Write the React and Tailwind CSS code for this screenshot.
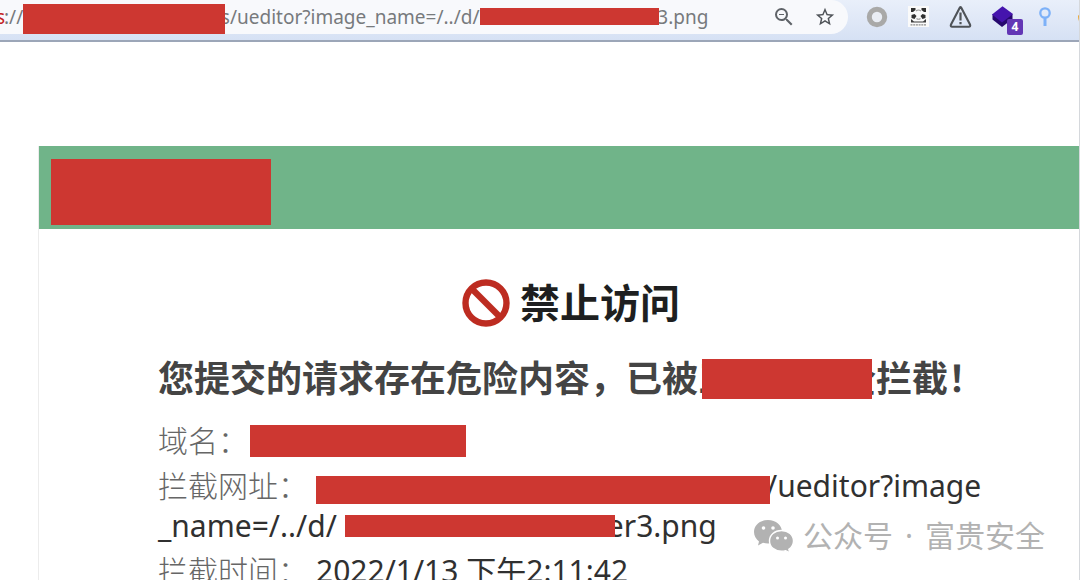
import { MdOutlineZoomOut, MdStarBorder } from "react-icons/md"
import clsx from "clsx"

const gap = (n) => "\u00a0".repeat(n)

const url = `://${gap(40)}s/ueditor?image_name=/../d/${gap(36)}3.png`

function Redacted({ className }) {
  return <span className={clsx("z-10 block shrink-0 bg-[#cd3731]", className)} />
}

function RingIcon() {
  return (
    <svg viewBox="0 0 24 24" className="h-6 w-6">
      <circle cx="12" cy="12" r="7.7" fill="#e9edf4" stroke="#a9a9a8" strokeWidth="5" />
    </svg>
  )
}

function PandaIcon() {
  return (
    <svg viewBox="0 0 24 24" className="h-6 w-6">
      <rect x="1" y="1" width="21" height="21" fill="#fafafa" />
      <path d="M4 7V3h4.500v2L6 7zM19 7V3h-4.500v2L17 7z" fill="#303030" />
      <path d="M4.500 10l3-1 2 2-2 3-3-1zM18.500 10l-3-1-2 2 2 3 3-1z" fill="#303030" />
      <path d="M4 14l3 2.500h9l3-2.500v3.500H4z" fill="#3c3c3c" />
      <path d="M9 6q2.500-2 5 0M9.500 13.500q2 1.500 4 0" fill="none" stroke="#9c9c9c" strokeWidth="1.200" />
      <path d="M3.500 19.800h16" stroke="#8c8c8c" strokeWidth="1.300" strokeDasharray="2 .7" />
    </svg>
  )
}

function WarningIcon() {
  return (
    <svg viewBox="0 0 24 24" className="h-6 w-6" fill="none" stroke="#4f5358" strokeWidth="2.100" strokeLinejoin="round">
      <path d="M11 2.300 2 19.500c-.6 1.400 0 2.300 1.200 2.300h16.600c1.200 0 1.800-.9 1.200-2.300L12 2.300c-.3-.4-.7-.4-1 0z" />
      <path d="M11.500 7.500v8M11.500 17v2.300" strokeWidth="2.200" />
    </svg>
  )
}

function LayersIcon() {
  return (
    <svg viewBox="0 0 24 24" className="h-6 w-6">
      <path d="M1.500 9v5.500L11 22l10.500-8V9z" fill="#26096e" />
      <path d="M11.500 1.200 22 9 11 17.500 1 9.500z" fill="#4514ad" />
    </svg>
  )
}

function PinIcon() {
  return (
    <svg viewBox="0 0 24 24" className="h-6 w-6" fill="none" stroke="#7db1f8">
      <circle cx="12" cy="8" r="4.700" strokeWidth="2.300" />
      <path d="M12 13v8" strokeWidth="3" />
    </svg>
  )
}

function OrangeIcon() {
  return (
    <svg viewBox="0 0 24 24" className="h-6 w-6">
      <path d="M3 11c3-4 6-6 10-6s8 4 8 8-4 8-9 8c-6 0-9-4-9-10z" fill="#e9a83b" />
    </svg>
  )
}

function ForbiddenIcon() {
  return (
    <svg viewBox="0 0 48 48" className="h-12 w-12" fill="none" stroke="#bd2c21" aria-hidden="true">
      <circle cx="24" cy="24" r="20.500" strokeWidth="6.400" />
      <path d="M9.500 9.500l29 29" strokeWidth="6.400" />
    </svg>
  )
}

function WechatIcon() {
  return (
    <svg viewBox="0 0 42 34" className="h-[34px] w-[42px]" aria-hidden="true">
      <path
        d="M15 1C7 1 1 6.200 1 13c0 4 2 7.200 5 9.400L5 26.500l5-2.700c1.600.5 3.300.8 5 .8 8 0 14-5 14-11.600S23 1 15 1z"
        fill="#b2b2b2"
      />
      <path
        d="M28.500 11.500C21.600 11.500 16.500 16 16.500 22s5.100 10.300 12 10.300c1.500 0 2.900-.2 4.200-.6l4.300 2.200-1.200-3.600c3-2 4.700-4.900 4.700-8.300 0-6-5.100-10.500-12-10.500z"
        fill="#b2b2b2"
        stroke="#fff"
        strokeWidth="1.400"
      />
      <g fill="#fff">
        <circle cx="10.500" cy="9" r="1.800" />
        <circle cx="20" cy="9" r="1.800" />
        <circle cx="24.500" cy="19" r="1.500" />
        <circle cx="32.500" cy="19" r="1.500" />
      </g>
    </svg>
  )
}

const extensions = [
  { name: "Ring", icon: RingIcon },
  { name: "Panda", icon: PandaIcon },
  { name: "Warning", icon: WarningIcon },
  { name: "Layers", icon: LayersIcon, badge: "4" },
  { name: "Pin", icon: PinIcon },
  { name: "Orange", icon: OrangeIcon },
]

function Toolbar() {
  return (
    <header className="flex h-[42px] items-start border-b-2 border-[#9ca6b8] bg-linear-to-b from-[#e9effa] to-[#d6e1f4]">
      <div className="relative flex h-[34px] min-w-0 flex-1 items-center rounded-r-full bg-[#f8f9fc] pr-3 text-[19px] text-[#777a7d]">
        <span className="-ml-1 w-2 text-[#c5221f]">s</span>
        <input
          type="text"
          aria-label="Address"
          readOnly
          value={url}
          className="h-8 min-w-0 flex-1 bg-transparent outline-none"
        />
        <Redacted className="absolute top-1 left-[23px] h-[30px] w-[202px]" />
        <Redacted className="absolute top-2 left-[480px] h-[17px] w-[179px]" />
        <button type="button" aria-label="Zoom out" className="mr-[18px]">
          <MdOutlineZoomOut className="h-6 w-6 text-[#5f6368]" />
        </button>
        <button type="button" aria-label="Bookmark">
          <MdStarBorder className="h-[22px] w-[22px] text-[#4f5358]" />
        </button>
      </div>
      <div className="flex w-[231px] gap-[18px] overflow-hidden pt-[5px] pb-2 pl-[17px]">
        {extensions.map(({ name, icon: Icon, badge }) => (
          <button type="button" key={name} aria-label={name} className="relative h-6 w-6 shrink-0">
            <Icon />
            {badge && (
              <span className="absolute -right-2 -bottom-1.5 flex h-4 w-4 items-center justify-center rounded-xs bg-[#6337b5] text-xs font-bold text-white">
                {badge}
              </span>
            )}
          </button>
        ))}
      </div>
    </header>
  )
}

function BlockedCard() {
  return (
    <section className="-mr-6 ml-[38px] border-l border-[#ececec]">
      <div className="bg-[#70b489] px-3 pt-[13px] pb-1">
        <Redacted className="h-[66px] w-[220px]" />
      </div>
      <div className="px-[119px] pt-12">
        <h1 className="flex items-center justify-center gap-2.5 text-[40px] leading-[52px] font-bold text-[#1e1f20]">
          <ForbiddenIcon />
          禁止访问
        </h1>
        <h2 className="mt-6 flex items-center text-[36px] leading-[52px] font-bold whitespace-nowrap text-[#444]">
          您提交的请求存在危险内容，已被三
          <Redacted className="-ml-8 h-10 w-[170px]" />
          <span className="-ml-8">全拦截！</span>
        </h2>
        <div className="mt-4 flex flex-col gap-[5px] text-[30px] leading-10 whitespace-nowrap text-[#303030]">
          <p className="flex items-center">
            <span className="mr-0.5 font-light text-[#666]">域名：</span>
            <Redacted className="h-8 w-[216px]" />
          </p>
          <div>
            <p className="flex items-center">
              <span className="mr-2 font-light text-[#666]">拦截网址：</span>
              <Redacted className="-mr-1 mb-0.5 h-7 w-[454px] self-end" />
              /ueditor?image
            </p>
            <p className="flex items-center">
              _name=/../d/
              <Redacted className="-mr-2 ml-2 h-[22px] w-[270px]" />
              er3.png
            </p>
          </div>
          <p>
            <span className="mr-2 font-light text-[#666]">拦截时间：</span>
            2022/1/13 下午2:11:42
          </p>
        </div>
      </div>
    </section>
  )
}

function App() {
  return (
    <div className="relative h-screen overflow-hidden border-r border-[#d5d8dc] bg-white font-['Noto_Sans','Noto_Sans_CJK_SC',sans-serif]">
      <Toolbar />
      <main className="pt-[104px]">
        <BlockedCard />
      </main>
      <div className="absolute right-[34px] bottom-6 flex items-center gap-2 text-[30px] leading-10 text-[#b2b2b2]">
        <WechatIcon />
        <p className="flex gap-3">
          <span>公众号</span>
          <span>·</span>
          <span>富贵安全</span>
        </p>
      </div>
    </div>
  )
}

export default App
